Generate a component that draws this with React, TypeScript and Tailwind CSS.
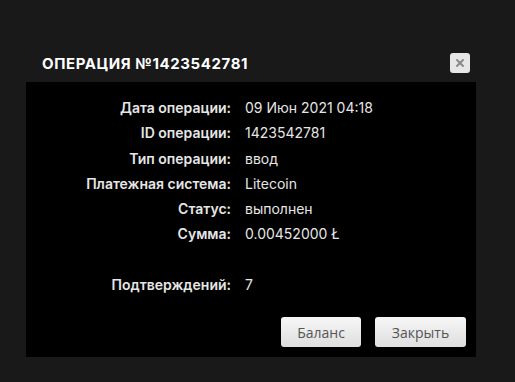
import { X } from "lucide-react";

const rows: [string, string][] = [
  ["Дата операции:", "09 Июн 2021 04:18"],
  ["ID операции:", "1423542781"],
  ["Тип операции:", "ввод"],
  ["Платежная система:", "Litecoin"],
  ["Статус:", "выполнен"],
  ["Сумма:", "0.00452000 Ł"],
  ["", ""],
  ["Подтверждений:", "7"],
];

export default function App() {
  return (
    <div className="w-[515px] h-[382px] bg-[#191919] overflow-hidden font-['Inter','Noto_Sans',sans-serif]">
      <div className="pt-[53px] pl-[26px] w-[476px]">
        {/* Header */}
        <div className="flex items-start justify-between h-[29px] pl-4 pr-[6px]">
          <h2 className="pt-[3px] text-[15px] font-bold tracking-[0.04em] text-white uppercase leading-none">
            Операция №1423542781
          </h2>
          <button className="w-5 h-5 rounded-[3px] bg-[#e6e6e6] flex items-center justify-center">
            <X size={12} strokeWidth={4} className="text-[#8a8a8a]" />
          </button>
        </div>

        {/* Body */}
        <div className="bg-black pt-[13px] pb-[10px] pr-[10px]">
          <div className="grid grid-cols-[205px_1fr] gap-x-[14px] text-[14px] leading-[25.3px] text-[#e6e6e6]">
            {rows.map(([label, value], i) => (
              <div key={i} className="contents">
                <span className="text-right font-semibold h-[25.3px]">{label}</span>
                <span className="h-[25.3px]">{value}</span>
              </div>
            ))}
          </div>

          <div className="flex justify-end gap-[14px] mt-[20px] font-['Open_Sans',sans-serif]">
            <button className="w-[80px] h-[30px] rounded-[3px] bg-gradient-to-b from-[#f7f7f7] to-[#dedede] text-[#555] text-[14px]">
              Баланс
            </button>
            <button className="w-[91px] h-[30px] rounded-[3px] bg-gradient-to-b from-[#f7f7f7] to-[#dedede] text-[#555] text-[14px]">
              Закрыть
            </button>
          </div>
        </div>
      </div>
    </div>
  );
}
